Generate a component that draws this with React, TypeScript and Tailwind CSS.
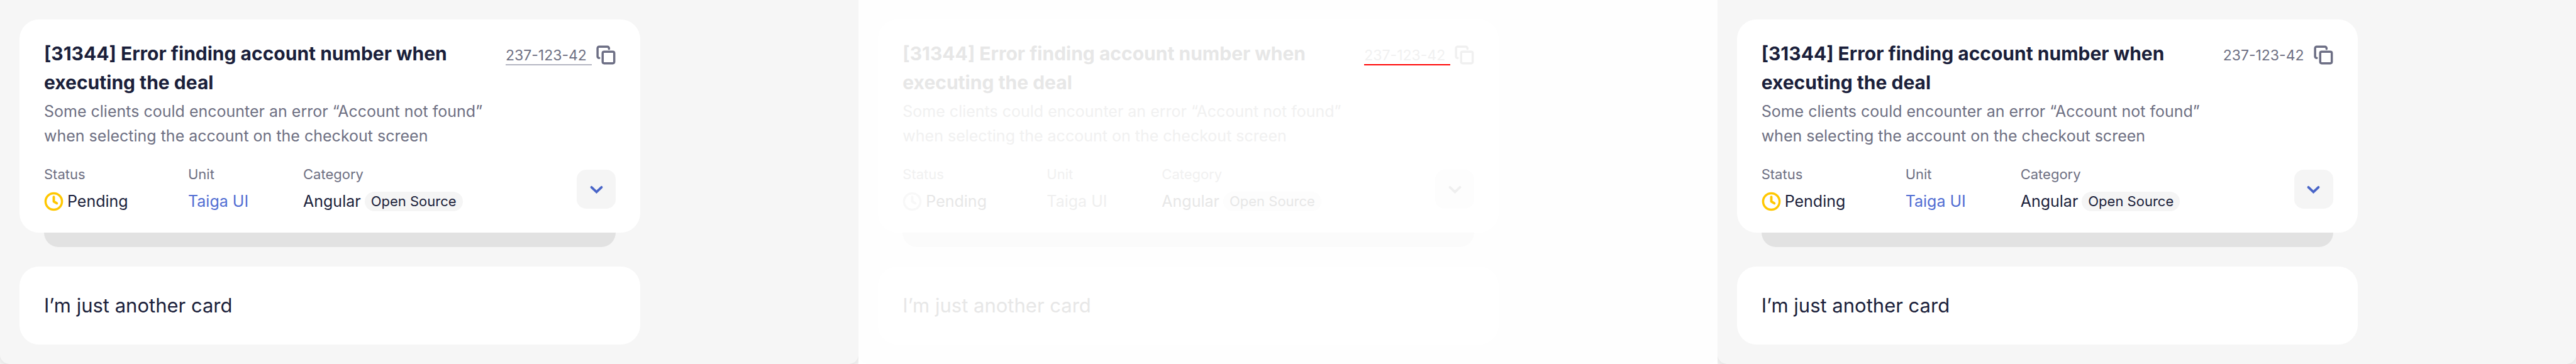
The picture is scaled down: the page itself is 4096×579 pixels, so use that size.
import { clsx } from "clsx";

type Variant = "underlined" | "faded" | "plain";

interface Theme {
  panel: string;
  shadow: string;
  primary: string;
  secondary: string;
  link: string;
  clock: string;
  icon: string;
  chevron: string;
  muted: string;
  backdrop: string;
  underline: string;
}

const normal: Theme = {
  panel: "bg-[#f6f6f6]",
  shadow: "shadow-[0_4px_24px_rgba(0,0,0,0.2)]",
  primary: "text-[#1b1f3b]",
  secondary: "text-[#6e7083]",
  link: "text-[#526ed3]",
  clock: "text-[#ffc700]",
  icon: "text-[#6c6e84]",
  chevron: "text-[#4965c8]",
  muted: "bg-[#f5f5f5]",
  backdrop: "bg-[#e2e2e2]",
  underline: "border-[#b4b5c2]",
};

const themes: Record<Variant, Theme> = {
  underlined: normal,
  plain: { ...normal, underline: "border-transparent" },
  faded: {
    panel: "bg-[#fefefe]",
    shadow: "",
    primary: "text-[#e7e7e7]",
    secondary: "text-[#f1f1f1]",
    link: "text-[#efefef]",
    clock: "text-[#f8f8f8]",
    icon: "text-[#f0f0f0]",
    chevron: "text-[#efefef]",
    muted: "bg-[#fdfdfd]",
    backdrop: "bg-[#fbfbfb]",
    underline: "border-[#ff0000]",
  },
};

function CopyIcon() {
  return (
    <svg viewBox="0 0 32 32" className="size-[31px]" fill="none" stroke="currentColor" strokeWidth="3.6" strokeLinecap="round" strokeLinejoin="round" aria-hidden="true">
      <rect x="10.6" y="10.6" width="19" height="19" rx="2.4" />
      <path d="M21 6V4.8A2.6 2.6 0 0 0 18.4 2.2H4.8A2.6 2.6 0 0 0 2.2 4.8V18.4A2.6 2.6 0 0 0 4.8 21H5" />
    </svg>
  );
}

function ClockIcon({ className }: { className: string }) {
  return (
    <svg viewBox="0 0 32 32" className={clsx("size-[31px] shrink-0", className)} fill="none" stroke="currentColor" strokeLinecap="round" strokeLinejoin="round" aria-hidden="true">
      <circle cx="16" cy="16" r="13.5" strokeWidth="3.6" />
      <path d="M16 8.4V16L21 19" strokeWidth="4" />
    </svg>
  );
}

function ChevronIcon() {
  return (
    <svg viewBox="0 0 32 32" className="size-[31px]" fill="none" stroke="currentColor" strokeWidth="4" strokeLinecap="round" aria-hidden="true">
      <path d="M7.8 12.2L16 20L24.2 12.2" />
    </svg>
  );
}

function Panel({ variant }: { variant: Variant }) {
  const t = themes[variant];
  const label = clsx("text-[22px] leading-[31px]", t.secondary);
  const value = "flex h-[31px] items-center text-[25px] leading-[31px]";
  return (
    <div className="flex flex-1 overflow-hidden bg-white">
      <main className={clsx("flex-1 rounded-b-[15px] p-[31px]", t.panel, t.shadow)}>
        <div className="flex max-w-[987px] flex-col">
          <article className="rounded-[31px] bg-white px-[39px] pt-[31px] pb-[34px]">
            <header className="flex items-start justify-between">
              <div>
                <h2 className={clsx("max-w-[700px] text-[30px] leading-[46px] font-bold", t.primary)}>
                  [31344] Error finding account number when executing the deal
                </h2>
                <p className={clsx("mt-1 max-w-[710px] text-[25px] leading-[39px]", t.secondary)}>
                  Some clients could encounter an error “Account not found” when selecting the account on the checkout screen
                </p>
              </div>
              <div className="flex shrink-0 gap-[7px]">
                <a href="#account" className={clsx("block w-[137px] border-b-2 pt-3 text-[23px] leading-[28px]", t.secondary, t.underline)}>
                  237-123-42
                </a>
                <button type="button" aria-label="Copy" className={clsx("mt-[10px] size-[31px]", t.icon)}>
                  <CopyIcon />
                </button>
              </div>
            </header>
            <div className="mt-[26px] flex items-start justify-between">
              <dl className="flex">
                <div className="flex w-[229px] flex-col gap-3">
                  <dt className={label}>Status</dt>
                  <dd className={clsx(value, "gap-[6px]", t.primary)}>
                    <ClockIcon className={t.clock} />
                    Pending
                  </dd>
                </div>
                <div className="flex w-[183px] flex-col gap-3">
                  <dt className={label}>Unit</dt>
                  <dd className={value}>
                    <a href="#unit" className={t.link}>Taiga UI</a>
                  </dd>
                </div>
                <div className="flex flex-col gap-3">
                  <dt className={label}>Category</dt>
                  <dd className={clsx(value, "gap-[6px]", t.primary)}>
                    Angular
                    <span className={clsx("rounded-full px-[10px] text-[22px] leading-[31px]", t.muted)}>Open Source</span>
                  </dd>
                </div>
              </dl>
              <button type="button" aria-label="Expand" className={clsx("mt-2 flex size-[62px] items-center justify-center rounded-[15px]", t.muted, t.chevron)}>
                <ChevronIcon />
              </button>
            </div>
          </article>
          <div className={clsx("mx-[39px] h-[23px] rounded-b-[23px]", t.backdrop)} />
          <article className={clsx("mt-[31px] rounded-[31px] bg-white p-[39px] text-[31px] leading-[46px]", t.primary)}>
            I’m just another card
          </article>
        </div>
      </main>
    </div>
  );
}

export default function App() {
  return (
    <div className="flex min-h-screen font-['Inter','Liberation_Sans',sans-serif]">
      <Panel variant="underlined" />
      <Panel variant="faded" />
      <Panel variant="plain" />
    </div>
  );
}
